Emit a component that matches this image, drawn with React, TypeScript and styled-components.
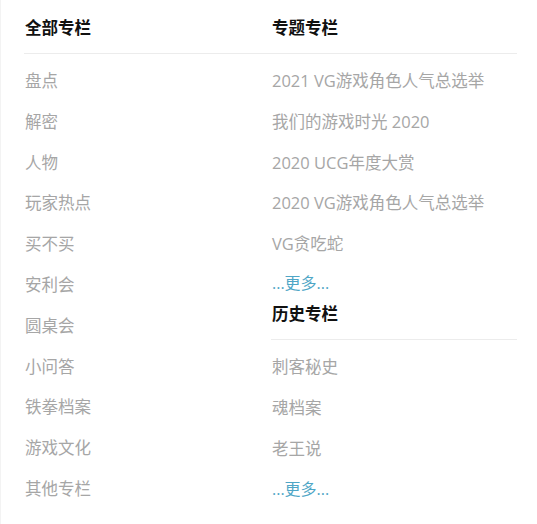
import styled, { createGlobalStyle } from 'styled-components'

const GlobalStyle = createGlobalStyle`
  body {
    margin: 0;
    background: #fff;
    font-family: "Open Sans", "Noto Sans CJK SC", sans-serif;
  }
`

const Page = styled.div`
  display: grid;
  grid-template-columns: 247px 246px;
  padding-left: 23px;
  border-left: 1px solid #f3f3f3;
  min-height: 524px;
  box-sizing: border-box;
`

const Column = styled.div`
  display: flex;
  flex-direction: column;
`

const Heading = styled.h3<{ $first?: boolean }>`
  margin: 0;
  padding: ${(props) => (props.$first ? '16px' : '0')} 0 13px 1px;
  font-size: 16.5px;
  line-height: 24px;
  font-weight: 700;
  color: #111;
  border-bottom: 1px solid #ececec;
`

const List = styled.ul`
  list-style: none;
  margin: 0;
  padding: 7px 0 0 1px;
`

const Item = styled.li`
  font-size: 16.5px;
  line-height: 40.8px;
  color: #a6a6a6;
  white-space: nowrap;
`

const More = styled.li<{ $tall?: boolean }>`
  font-size: 16px;
  line-height: ${(props) => (props.$tall ? '40.8px' : '37px')};
  color: #4fa6c6;
`

const allColumns = [
  '盘点',
  '解密',
  '人物',
  '玩家热点',
  '买不买',
  '安利会',
  '圆桌会',
  '小问答',
  '铁拳档案',
  '游戏文化',
  '其他专栏',
]

const topics = [
  '2021 VG游戏角色人气总选举',
  '我们的游戏时光 2020',
  '2020 UCG年度大赏',
  '2020 VG游戏角色人气总选举',
  'VG贪吃蛇',
]

const history = ['刺客秘史', '魂档案', '老王说']

const App = () => (
  <>
    <GlobalStyle />
    <Page>
      <Column>
        <Heading $first>全部专栏</Heading>
        <List>
          {allColumns.map((name) => (
            <Item key={name}>{name}</Item>
          ))}
        </List>
      </Column>
      <Column>
        <Heading $first>专题专栏</Heading>
        <List>
          {topics.map((name) => (
            <Item key={name}>{name}</Item>
          ))}
          <More>...更多...</More>
        </List>
        <Heading>历史专栏</Heading>
        <List>
          {history.map((name) => (
            <Item key={name}>{name}</Item>
          ))}
          <More $tall>...更多...</More>
        </List>
      </Column>
    </Page>
  </>
)

export default App
